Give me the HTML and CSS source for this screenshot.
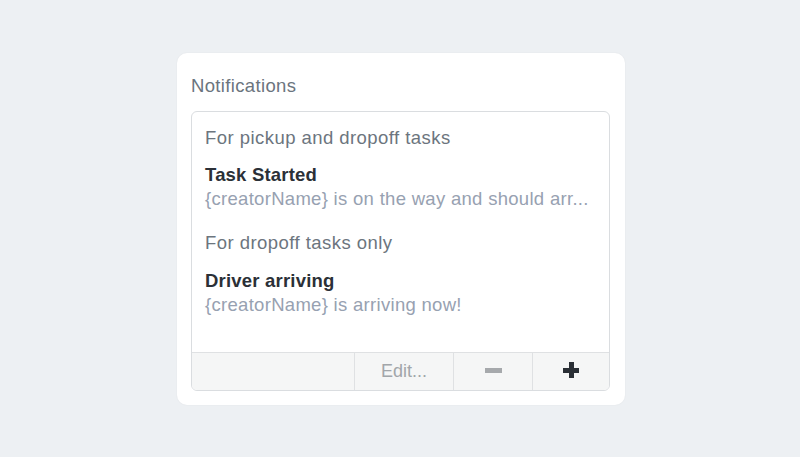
FILE: index.html
```html
<!DOCTYPE html>
<html>
<head>
<meta charset="utf-8">
<link rel="stylesheet" href="styles.css">
</head>
<body>
<div class="page">
  <div class="card">
    <div class="title">Notifications</div>
    <div class="box">
      <div class="list">
        <div class="group">For pickup and dropoff tasks</div>
        <div class="item">
          <div class="name">Task Started</div>
          <div class="desc">{creatorName} is on the way and should arr...</div>
        </div>
        <div class="group group-next">For dropoff tasks only</div>
        <div class="item item-second">
          <div class="name">Driver arriving</div>
          <div class="desc">{creatorName} is arriving now!</div>
        </div>
      </div>
      <div class="footer">
        <div class="cell cell-blank"></div>
        <div class="cell cell-edit">Edit...</div>
        <div class="cell cell-minus"><span class="minus"></span></div>
        <div class="cell cell-plus"><span class="plus"></span></div>
      </div>
    </div>
  </div>
</div>
</body>
</html>
```

FILE: styles.css
```css
* { box-sizing: border-box; }
html, body {
  margin: 0;
  padding: 0;
  background: #edf0f3;
  font-family: "Liberation Sans", Arial, sans-serif;
}
.page {
  width: 800px;
  height: 457px;
  padding-top: 53px;
  padding-left: 177px;
}
.card {
  width: 448px;
  height: 352px;
  background: #ffffff;
  border-radius: 10px;
  box-shadow: 0 0 2px rgba(0,0,0,0.06);
  padding: 21px 15px 0 14px;
}
.title {
  font-size: 18.5px;
  line-height: 22px;
  color: #6b747e;
  letter-spacing: 0.35px;
  height: 22px;
  margin-top: 1px;
}
.box {
  margin-top: 14px;
  width: 419px;
  border: 1px solid #dadde0;
  border-radius: 6px;
  overflow: hidden;
}
.list {
  height: 240px;
  padding: 14px 13px 0 13px;
}
.group {
  font-size: 18.5px;
  line-height: 24px;
  color: #6c757e;
  letter-spacing: 0.45px;
}
.group-next { margin-top: 19.5px; }
.item { margin-top: 13px; }
.item-second { margin-top: 14px; }
.name {
  font-size: 18.5px;
  line-height: 24px;
  font-weight: bold;
  color: #2b3037;
  letter-spacing: 0.2px;
}
.desc {
  font-size: 18.5px;
  line-height: 24.5px;
  color: #97a1b1;
  letter-spacing: 0.3px;
  white-space: nowrap;
}
.footer {
  display: flex;
  height: 38px;
  border-top: 1px solid #dfe1e3;
  background: #f5f6f6;
}
.cell {
  display: flex;
  align-items: center;
  justify-content: center;
  border-left: 1px solid #dfe1e3;
}
.cell-blank { width: 162px; border-left: none; }
.cell-edit {
  width: 99px;
  font-size: 18px;
  color: #a2a6aa;
  padding-bottom: 1px;
}
.cell-minus { width: 79px; }
.cell-plus { flex: 1; }
.minus {
  display: block;
  width: 17px;
  height: 5px;
  background: #a6a9ac;
  margin-top: -2px;
}
.plus {
  display: block;
  position: relative;
  width: 16px;
  height: 16px;
  margin-top: -3px;
}
.plus::before, .plus::after {
  content: "";
  position: absolute;
  background: #2a2f35;
}
.plus::before { left: 0; top: 5.5px; width: 16px; height: 5px; }
.plus::after { top: 0; left: 5.5px; width: 5px; height: 16px; }
```
